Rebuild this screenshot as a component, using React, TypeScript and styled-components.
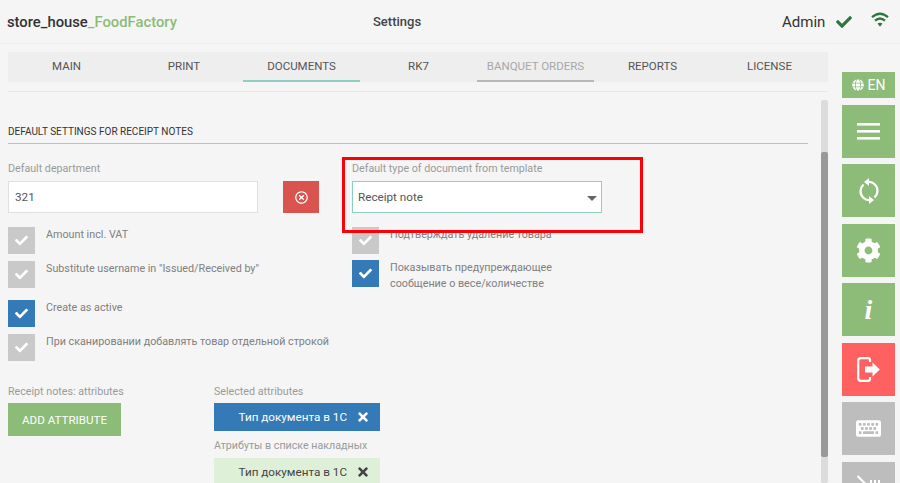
import React from "react";
import styled, { createGlobalStyle } from "styled-components";
import { FaCheck, FaCog, FaGlobe, FaKeyboard, FaRegTimesCircle, FaTimes } from "react-icons/fa";

const tabs = [
  { name: "MAIN" },
  { name: "PRINT" },
  { name: "DOCUMENTS", state: "active" },
  { name: "RK7" },
  { name: "BANQUET ORDERS", state: "disabled" },
  { name: "REPORTS" },
  { name: "LICENSE" },
];

const App = () => {
  return (
    <>
      <GlobalStyle />
      <Page>
        <Header>
          <Brand>
            store_house<span>_FoodFactory</span>
          </Brand>
          <Title>Settings</Title>
          <User>Admin</User>
          <StatusCheck>
            <FaCheck />
          </StatusCheck>
          <StatusWifi>
            <svg width="18" height="15" viewBox="0 0 18 15" fill="none" stroke="#33753f">
              <path d="M1 5.200Q9 -1.800 17 5.200" strokeWidth="2.300" />
              <path d="M4 8.700Q9 4.300 14 8.700" strokeWidth="2.200" />
              <path d="M6.500 11.500Q9 10 11.500 11.500L9 14.700Z" fill="#33753f" stroke="none" />
            </svg>
          </StatusWifi>
        </Header>
        <Body>
          <Main>
            <TabBar>
              {tabs.map((tab) => (
                <Tab key={tab.name} $state={tab.state}>
                  {tab.name}
                </Tab>
              ))}
            </TabBar>
            <Divider />
            <Scroller>
              <Content>
                <SectionTitle>DEFAULT SETTINGS FOR RECEIPT NOTES</SectionTitle>
                <Columns>
                  <Column>
                    <FieldLabel>Default department</FieldLabel>
                    <FieldRow>
                      <TextBox>321</TextBox>
                      <ClearButton>
                        <FaRegTimesCircle />
                      </ClearButton>
                    </FieldRow>
                    <CheckRow $gap={14}>
                      <CheckBox>
                        <FaCheck />
                      </CheckBox>
                      <CheckText>Amount incl. VAT</CheckText>
                    </CheckRow>
                    <CheckRow>
                      <CheckBox>
                        <FaCheck />
                      </CheckBox>
                      <CheckText>Substitute username in "Issued/Received by"</CheckText>
                    </CheckRow>
                    <CheckRow $gap={12}>
                      <CheckBox $on>
                        <FaCheck />
                      </CheckBox>
                      <CheckText>Create as active</CheckText>
                    </CheckRow>
                    <CheckRow>
                      <CheckBox>
                        <FaCheck />
                      </CheckBox>
                      <CheckText>При сканировании добавлять товар отдельной строкой</CheckText>
                    </CheckRow>
                  </Column>
                  <Column>
                    <FieldLabel>Default type of document from template</FieldLabel>
                    <FieldRow>
                      <SelectBox>
                        Receipt note
                        <Caret />
                      </SelectBox>
                    </FieldRow>
                    <CheckRow $gap={14}>
                      <CheckBox>
                        <FaCheck />
                      </CheckBox>
                      <CheckText>Подтверждать удаление товара</CheckText>
                    </CheckRow>
                    <CheckRow $gap={6}>
                      <CheckBox $on>
                        <FaCheck />
                      </CheckBox>
                      <CheckText>
                        Показывать предупреждающее
                        <br />
                        сообщение о весе/количестве
                      </CheckText>
                    </CheckRow>
                  </Column>
                  <Highlight />
                </Columns>
                <Attributes>
                  <AttrLeft>
                    <FieldLabel>Receipt notes: attributes</FieldLabel>
                    <AddButton>ADD ATTRIBUTE</AddButton>
                  </AttrLeft>
                  <AttrRight>
                    <FieldLabel>Selected attributes</FieldLabel>
                    <Chip $blue $top={3}>
                      Тип документа в 1С
                      <FaTimes />
                    </Chip>
                    <FieldLabel $top={7}>Атрибуты в списке накладных</FieldLabel>
                    <Chip $top={4}>
                      Тип документа в 1С
                      <FaTimes />
                    </Chip>
                  </AttrRight>
                </Attributes>
              </Content>
              <ScrollTrack>
                <ScrollThumb />
              </ScrollTrack>
            </Scroller>
          </Main>
          <Side>
            <LangTile>
              <FaGlobe />
              EN
            </LangTile>
            <Tile>
              <svg width="23" height="17" viewBox="0 0 23 17" fill="#fff">
                <rect y="0" width="23" height="2.600" />
                <rect y="7" width="23" height="2.600" />
                <rect y="14" width="23" height="2.600" />
              </svg>
            </Tile>
            <Tile>
              <svg width="22" height="28" viewBox="0 0 22 28" fill="none" stroke="#fff" strokeWidth="2.300">
                <path d="M10 5A8.500 9 0 0 1 19.500 14C19.500 17 18 19 16.500 20.500" />
                <path d="M12 23A8.500 9 0 0 1 2.500 14C2.500 11 4 9 5.500 7.500" />
                <path d="M11 1L6 5L11 9Z" fill="#fff" stroke="none" />
                <path d="M11 19L16 23L11 27Z" fill="#fff" stroke="none" />
              </svg>
            </Tile>
            <Tile>
              <FaCog />
            </Tile>
            <Tile>
              <InfoGlyph>i</InfoGlyph>
            </Tile>
            <Tile $color="#ff6161">
              <svg width="23" height="25" viewBox="0 0 23 25" fill="none">
                <path
                  d="M13 5V3Q13 1.200 11 1.200H4Q1.200 1.200 1.200 4V21Q1.200 23.800 4 23.800H11Q13 23.800 13 22V20"
                  stroke="#fff"
                  strokeWidth="2.200"
                />
                <path d="M8 9.500H15.500V5.500L22.800 12.500L15.500 19.500V15.500H8Z" fill="#fff" />
              </svg>
            </Tile>
            <Tile $color="#bdbdbd">
              <FaKeyboard />
            </Tile>
            <Tile $color="#bdbdbd">
              <svg width="26" height="26" viewBox="0 0 26 26" fill="#fff">
                <path d="M2 0l9 9-1.500 1.500L1 2z" />
                <rect x="14" y="5" width="2" height="8" />
                <rect x="18" y="5" width="2" height="8" />
                <rect x="22" y="5" width="2" height="8" />
              </svg>
            </Tile>
          </Side>
        </Body>
      </Page>
    </>
  );
};

export default App;

const GlobalStyle = createGlobalStyle`
  html, body {
    margin: 0;
    padding: 0;
    background: #f5f5f5;
  }
  * {
    box-sizing: border-box;
  }
`;

const Page = styled.div`
  width: 900px;
  height: 483px;
  overflow: hidden;
  background: #f5f5f5;
  color: #424242;
  font-family: Roboto, "Liberation Sans", sans-serif;
`;

const Header = styled.div`
  display: flex;
  align-items: center;
  height: 44px;
  padding-left: 7px;
  border-bottom: 1px solid #ececec;
`;

const Brand = styled.div`
  width: 366px;
  font-size: 14.800px;
  font-weight: 500;
  color: #333;
  span {
    color: #8cbd78;
  }
`;

const Title = styled.div`
  width: 409px;
  font-size: 13px;
  font-weight: 500;
  color: #444;
`;

const User = styled.div`
  font-size: 15px;
  margin-top: 1px;
  color: #333;
`;

const StatusCheck = styled.div`
  display: flex;
  margin-left: 11px;
  margin-top: 1px;
  font-size: 16px;
  color: #33753f;
`;

const StatusWifi = styled.div`
  display: flex;
  margin-left: 19px;
  margin-top: -5px;
`;

const Body = styled.div`
  display: flex;
`;

const Main = styled.div`
  width: 820px;
  margin-left: 8px;
`;

const TabBar = styled.div`
  display: grid;
  grid-template-columns: 117px 118px repeat(5, 1fr);
  height: 30px;
  margin-top: 8px;
  background: #eeeeee;
`;

const Tab = styled.div<{ $state?: string }>`
  display: flex;
  align-items: center;
  justify-content: center;
  font-size: 11.500px;
  color: ${(p) => (p.$state === "disabled" ? "#a8a8a8" : "#555")};
  border-bottom: 2px solid
    ${(p) => (p.$state === "active" ? "#8fcfc2" : p.$state === "disabled" ? "#b8b8b8" : "transparent")};
`;

const Divider = styled.div`
  height: 1px;
  margin-top: 9px;
  background: #e8e8e8;
`;

const Scroller = styled.div`
  display: flex;
  justify-content: space-between;
  height: 391px;
  margin-top: 8px;
`;

const Content = styled.div`
  width: 800px;
`;

const SectionTitle = styled.div`
  height: 44px;
  padding-top: 24px;
  font-size: 10px;
  line-height: 15px;
  color: #333;
  border-bottom: 1px solid #a9cf9a;
`;

const Columns = styled.div`
  position: relative;
  display: flex;
  height: 240px;
`;

const Column = styled.div`
  width: 344px;
  padding-top: 17px;
`;

const FieldLabel = styled.div<{ $top?: number }>`
  margin-top: ${(p) => p.$top ?? 0}px;
  font-size: 10.700px;
  line-height: 16px;
  color: #9a9a9a;
`;

const FieldRow = styled.div`
  display: flex;
  gap: 25px;
  height: 32px;
  margin-top: 4px;
`;

const TextBox = styled.div`
  display: flex;
  align-items: center;
  width: 250px;
  padding-left: 6px;
  font-size: 11.700px;
  color: #555;
  background: #fff;
  border: 1px solid #e0e0e0;
`;

const ClearButton = styled.div`
  display: flex;
  align-items: center;
  justify-content: center;
  width: 36px;
  font-size: 13px;
  color: #fff;
  background: #d9534f;
`;

const SelectBox = styled.div`
  position: relative;
  display: flex;
  align-items: center;
  width: 250px;
  padding-left: 5px;
  font-size: 11.700px;
  color: #555;
  background: #fff;
  border: 1px solid #8fcfc2;
`;

const Caret = styled.span`
  position: absolute;
  right: 4px;
  top: 14px;
  border-left: 5px solid transparent;
  border-right: 5px solid transparent;
  border-top: 5px solid #666;
`;

const CheckRow = styled.div<{ $gap?: number }>`
  display: flex;
  gap: 11px;
  margin-top: ${(p) => p.$gap ?? 7}px;
`;

const CheckBox = styled.div<{ $on?: boolean }>`
  display: flex;
  flex: none;
  align-items: center;
  justify-content: center;
  width: 27px;
  height: 27px;
  font-size: 13px;
  color: #fff;
  background: ${(p) => (p.$on ? "#337ab7" : "#c9c9c9")};
`;

const CheckText = styled.div`
  font-size: 10.750px;
  line-height: 16px;
  color: #808080;
  white-space: nowrap;
`;

const Highlight = styled.div`
  position: absolute;
  left: 334px;
  top: 13px;
  width: 301px;
  height: 76px;
  border: 3px solid #fb0007;
`;

const Attributes = styled.div`
  display: flex;
`;

const AttrLeft = styled.div`
  width: 206px;
`;

const AttrRight = styled.div`
  width: 166px;
`;

const AddButton = styled.div`
  display: flex;
  align-items: center;
  justify-content: center;
  width: 113px;
  height: 33px;
  margin-top: 3px;
  font-size: 11.600px;
  color: #fff;
  background: #8dbb78;
`;

const Chip = styled.div<{ $blue?: boolean; $top: number }>`
  display: flex;
  align-items: center;
  justify-content: flex-end;
  gap: 9px;
  height: 28px;
  margin-top: ${(p) => p.$top}px;
  padding-right: 10px;
  font-size: 11.700px;
  color: ${(p) => (p.$blue ? "#fff" : "#444")};
  background: ${(p) => (p.$blue ? "#337ab7" : "#dff0d8")};
  svg {
    font-size: 14px;
  }
`;

const ScrollTrack = styled.div`
  width: 7px;
  height: 383px;
  padding-top: 52px;
  background: #dcdcdc;
  border-radius: 2px;
`;

const ScrollThumb = styled.div`
  height: 305px;
  background: #999;
  border-radius: 2px;
`;

const Side = styled.div`
  display: flex;
  flex-direction: column;
  gap: 6.500px;
  width: 53px;
  margin-left: 14px;
  margin-top: 28px;
`;

const LangTile = styled.div`
  display: flex;
  align-items: center;
  justify-content: center;
  gap: 4px;
  height: 26px;
  font-size: 14px;
  color: #fff;
  background: #8dbb78;
  svg {
    font-size: 12px;
  }
`;

const Tile = styled.div<{ $color?: string }>`
  display: flex;
  flex: none;
  align-items: center;
  justify-content: center;
  height: 53px;
  font-size: 25px;
  color: #fff;
  background: ${(p) => p.$color ?? "#8dbb78"};
`;

const InfoGlyph = styled.span`
  font-family: "Liberation Serif", serif;
  font-size: 28px;
  font-style: italic;
  font-weight: 700;
`;
